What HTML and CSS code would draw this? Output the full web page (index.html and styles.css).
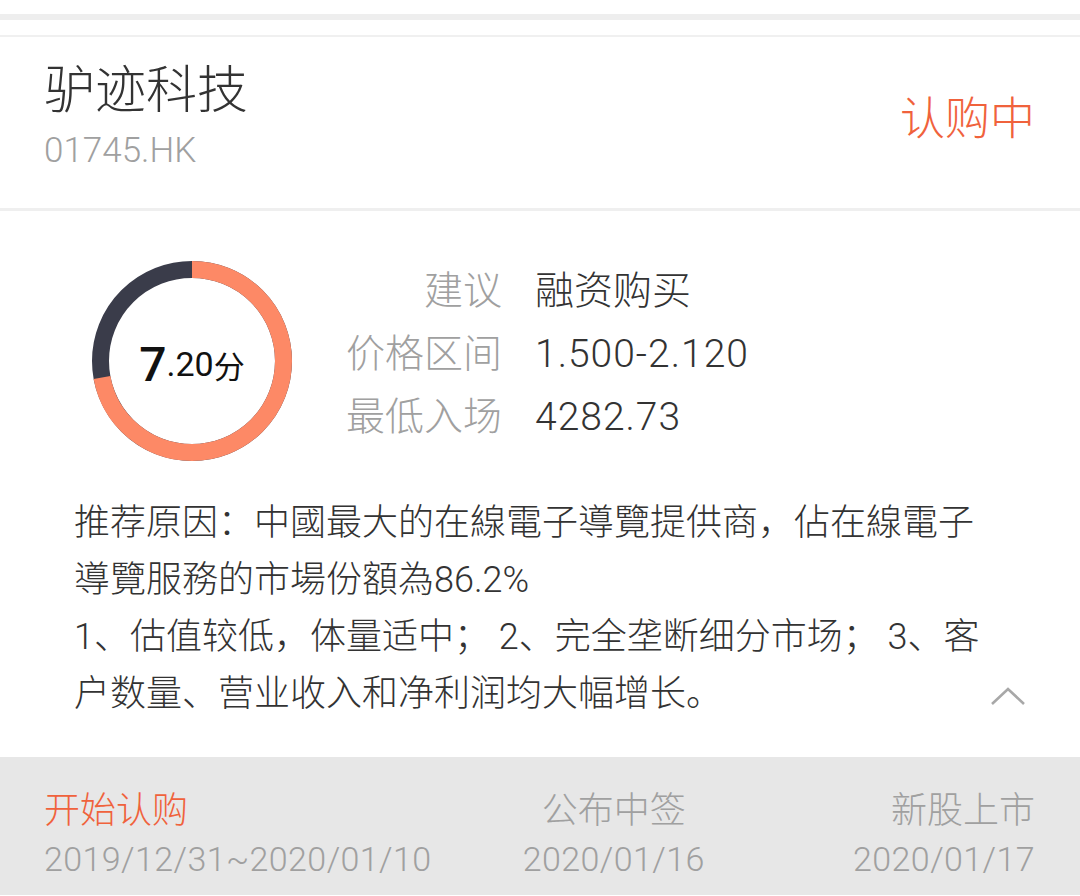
FILE: index.html
```html
<!doctype html>
<html lang="zh-CN">
<head>
  <meta charset="UTF-8">
  <meta name="viewport" content="width=device-width, initial-scale=1.0">
  <title>驴迹科技 01745.HK</title>
  <link rel="stylesheet" href="styles.css">
</head>
<body>

<div class="top-strip"></div>
<div class="top-gap"></div>

<div class="stock-head">
  <div class="stock-name">
    <h1>驴迹科技</h1>
    <div class="code">01745.HK</div>
  </div>
  <div class="status">认购中</div>
</div>

<div class="detail">
  <div class="summary">
    <div class="score">
      <svg width="200" height="200" viewBox="0 0 200 200">
        <circle cx="100" cy="100" r="91.5" fill="none" stroke="#3a3c4a" stroke-width="17"/>
        <!-- 7.20 / 10 of the ring, clockwise from the top -->
        <circle cx="100" cy="100" r="91.5" fill="none" stroke="#fd8966" stroke-width="17"
                stroke-dasharray="413.9 575" transform="rotate(-90 100 100)"/>
      </svg>
      <div class="score-text"><b>7</b>.20<span>分</span></div>
    </div>
    <div class="facts">
      <span class="label">建议</span><span class="value">融资购买</span>
      <span class="label">价格区间</span><span class="value num">1.500-2.120</span>
      <span class="label">最低入场</span><span class="value num">4282.73</span>
    </div>
  </div>

  <p class="reason">推荐原因：中國最大的在線電子導覽提供商，佔在線電子導覽服務的市場份額為86.2%</p>
  <p class="reason">1、估值较低，体量适中； 2、完全垄断细分市场； 3、客户数量、营业收入和净利润均大幅增长。</p>

  <svg class="collapse" width="36" height="20" viewBox="0 0 36 20">
    <polyline points="2,17 18,2 34,17" fill="none" stroke="#a8a8a8" stroke-width="2.6"/>
  </svg>
</div>

<div class="timeline">
  <div class="step active">
    <div class="step-name">开始认购</div>
    <div class="step-date">2019/12/31~2020/01/10</div>
  </div>
  <div class="step middle">
    <div class="step-inner">
      <div class="step-name">公布中签</div>
      <div class="step-date">2020/01/16</div>
    </div>
  </div>
  <div class="step last">
    <div class="step-name">新股上市</div>
    <div class="step-date">2020/01/17</div>
  </div>
</div>

</body>
</html>
```

FILE: styles.css
```css
body {
  font-family: 'Roboto', 'Noto Sans CJK SC', sans-serif;
  font-weight: 300;
  background-color: #ffffff;
  margin: 0;
  width: 1080px;
  color: #333;
}

.top-strip {
  height: 14px;
  border-bottom: 6px solid #eeeeee;
}

.top-gap {
  height: 15px;
  border-bottom: 2px solid #f0f0f0;
}

.stock-head {
  display: flex;
  justify-content: space-between;
  align-items: flex-start;
  height: 171px;
  padding: 0 45px 0 44px;
  border-bottom: 3px solid #efefef;
}

.stock-name {
  padding-top: 26px;
}

.stock-name h1 {
  margin: 0 0 10px 0;
  font-size: 51px;
  font-weight: 300;
  line-height: 56px;
  color: #333;
}

.stock-name .code {
  font-size: 35px;
  line-height: 44px;
  color: #a0a0a0;
}

.status {
  font-size: 45px;
  line-height: 56px;
  color: #f0623c;
  margin-top: 55px;
}

.detail {
  position: relative;
  padding: 50px 0 34px 0;
}

.summary {
  display: flex;
  align-items: flex-start;
  padding-left: 92px;
}

.score {
  position: relative;
  width: 200px;
  height: 200px;
}

.score svg {
  display: block;
}

.score-text {
  position: absolute;
  top: 0;
  left: 0;
  width: 200px;
  height: 200px;
  display: flex;
  align-items: center;
  justify-content: center;
  font-size: 34px;
  font-weight: 400;
  color: #111;
  padding-top: 6px;
  box-sizing: border-box;
}

.score-text b {
  font-size: 48px;
  font-weight: 500;
}

.score-text span {
  font-size: 31px;
}

.facts {
  display: grid;
  grid-template-columns: 158px auto;
  column-gap: 33px;
  margin-left: 52px;
  margin-top: -1px;
  font-size: 39px;
  line-height: 63px;
}

.facts .label {
  text-align: right;
  color: #a0a0a0;
}

.facts .value {
  color: #333;
}

.facts .num {
  letter-spacing: 1px;
}

.reason {
  margin: 0;
  padding-left: 74px;
  width: 920px;
  font-size: 36px;
  line-height: 57px;
  color: #333;
}

.summary + .reason {
  margin-top: 34px;
}

.collapse {
  position: absolute;
  right: 54px;
  bottom: 50px;
}

.timeline {
  display: grid;
  grid-template-columns: minmax(0, 1fr) minmax(0, 1fr) minmax(0, 1fr);
  background-color: #e7e7e7;
  padding: 30px 45px 0 44px;
  height: 108px;
}

.step {
  white-space: nowrap;
}

.step-name {
  font-size: 36px;
  line-height: 48px;
  color: #a0a0a0;
}

.step-date {
  font-size: 34px;
  line-height: 48px;
  letter-spacing: 0.4px;
  color: #a0a0a0;
}

.step.active .step-name {
  color: #f0623c;
}

.step.middle {
  display: flex;
  justify-content: flex-end;
}

.step-inner {
  text-align: center;
}

.step.last {
  text-align: right;
}
```
